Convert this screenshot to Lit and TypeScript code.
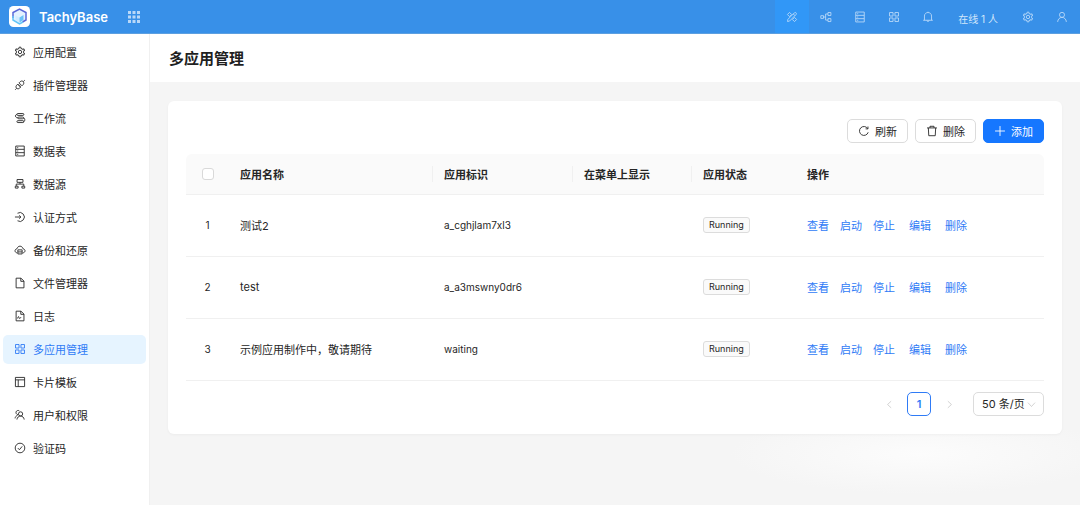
import { LitElement, html, svg, css, nothing, type SVGTemplateResult } from "lit";
import { customElement, property } from "lit/decorators.js";
import { classMap } from "lit/directives/class-map.js";

// Glyphs share a 1024-unit square; strokes come from the icon element's styles.
const ICONS: Record<string, SVGTemplateResult> = {
  setting: svg`
    <path class="solid" d="M924.8 625.7l-65.5-56c3.1-19 4.7-38.4 4.7-57.8s-1.6-38.8-4.7-57.8l65.5-56a32.03 32.03 0 009.3-35.2l-.9-2.6a443.74 443.74 0 00-79.7-137.9l-1.8-2.1a32.12 32.12 0 00-35.1-9.5l-81.3 28.9c-30-24.6-63.5-44-99.7-57.6l-15.7-85a32.05 32.05 0 00-25.8-25.7l-2.7-.5c-52.1-9.4-106.9-9.4-159 0l-2.7.5a32.05 32.05 0 00-25.8 25.7l-15.8 85.4a351.86 351.86 0 00-99 57.4l-81.9-29.1a32 32 0 00-35.1 9.5l-1.8 2.1a446.02 446.02 0 00-79.7 137.9l-.9 2.6c-4.5 12.5-.8 26.5 9.3 35.2l66.3 56.6c-3.1 18.8-4.6 38-4.6 57.1 0 19.2 1.5 38.4 4.6 57.1L99 625.5a32.03 32.03 0 00-9.3 35.2l.9 2.6c18.1 50.4 44.9 96.9 79.7 137.9l1.8 2.1a32.12 32.12 0 0035.1 9.5l81.9-29.1c29.8 24.5 63.1 43.9 99 57.4l15.8 85.4a32.05 32.05 0 0025.8 25.7l2.7.5a449.4 449.4 0 00159 0l2.7-.5a32.05 32.05 0 0025.8-25.7l15.7-85a350 350 0 0099.7-57.6l81.3 28.9a32 32 0 0035.1-9.5l1.8-2.1c34.8-41.1 61.6-87.5 79.7-137.9l.9-2.6c4.5-12.3.8-26.3-9.3-35zM788.3 465.9c2.5 15.1 3.8 30.6 3.8 46.1s-1.3 31-3.8 46.1l-6.6 40.1 74.7 63.9a370.03 370.03 0 01-42.6 73.6L721 702.8l-31.4 25.8c-23.9 19.6-50.5 35-79.3 45.8l-38.1 14.3-17.9 97a377.5 377.5 0 01-85 0l-17.9-97.2-37.8-14.5c-28.5-10.8-55-26.2-78.7-45.7l-31.4-25.9-93.4 33.2c-17-22.9-31.2-47.6-42.6-73.6l75.5-64.5-6.5-40c-2.4-14.9-3.7-30.3-3.7-45.5 0-15.3 1.2-30.6 3.7-45.5l6.5-40-75.5-64.5c11.3-26.1 25.6-50.7 42.6-73.6l93.4 33.2 31.4-25.9c23.7-19.5 50.2-34.9 78.7-45.7l37.9-14.3 17.9-97.2c28.1-3.2 56.8-3.2 85 0l17.9 97 38.1 14.3c28.7 10.8 55.4 26.2 79.3 45.8l31.4 25.8 92.8-32.9c17 22.9 31.2 47.6 42.6 73.6L781.8 426l6.5 39.9z"/>
    <circle cx="512" cy="508" r="144"/>`,
  plug: svg`
    <path d="M430 330l100-100c80-80 180-80 250-10s80 180 0 260L680 580z"/>
    <path d="M330 430L230 530c-80 80-80 180-10 250s180 80 260 0l100-100z"/>
    <path d="M790 230l130-130M230 790L100 920M450 500l-70 70M530 580l-70 70"/>`,
  workflow: svg`
    <path d="M330 130h430a80 80 0 010 160H330a80 80 0 010-160zM410 430h330a75 75 0 010 150H410a75 75 0 010-150zM330 740h430a80 80 0 010 160H330a80 80 0 010-160z"/>
    <path d="M250 210c-180 0-180 295 90 295M800 505c170 0 150 310 20 315"/>`,
  database: svg`
    <path d="M150 90h724v844H150zM150 370h724M150 654h724"/>
    <path d="M270 230h90M270 512h90M270 794h90"/>`,
  source: svg`
    <path d="M260 130h504v240H260zM512 370v150M190 680V520h644v160"/>
    <path d="M110 700h240v160H110zM674 700h240v160H674z"/>`,
  login: svg`
    <path d="M300 190a380 380 0 11 0 644M80 512h500M440 370l150 142-150 142"/>`,
  cloud: svg`
    <path d="M270 760c-240-30-240-320-20-350 80-300 440-300 524 0 230 40 220 320-20 350"/>
    <path d="M330 500h364v350H330zM330 675h364"/>`,
  file: svg`<path d="M180 100h420l250 250v574H180zM580 100v270h270"/>`,
  log: svg`<path d="M180 100h420l250 250v574H180zM580 100v270h270M300 720c60-200 120-200 130-60s100 40 190-60"/>`,
  apps: svg`<path d="M130 130h300v300H130zM594 130h300v300H594zM130 594h300v300H130zM594 594h300v300H594z"/>`,
  template: svg`<path d="M120 120h784v784H120zM120 330h784M360 330v574"/>`,
  team: svg`
    <circle cx="560" cy="420" r="180"/>
    <path d="M250 900c20-180 150-300 310-300s290 120 310 300"/>
    <path d="M330 480c-120-20-190-130-150-240 30-100 160-150 270-90M90 800c20-130 90-220 210-260"/>`,
  check: svg`<circle cx="512" cy="512" r="410"/><path d="M330 520l130 140 240-290"/>`,
  design: svg`
    <path d="M120 300l180-180 180 180-180 180zM544 724l180-180 180 180-180 180z"/>
    <path d="M130 894l30-180 560-560c90-90 230 50 140 140L300 860zM620 250l150 150"/>`,
  nodes: svg`
    <path d="M70 400h230v230H70zM680 130h250v250H680zM680 650h250v250H680z"/>
    <path d="M300 515h180M680 255H480v520h200"/>`,
  bell: svg`
    <path d="M100 790h824M210 790V430c0-400 604-400 604 0v360M420 800c0 130 184 130 184 0M512 60v70"/>`,
  user: svg`<circle cx="512" cy="330" r="215"/><path d="M140 930c20-230 170-385 372-385s352 155 372 385"/>`,
  reload: svg`<path d="M870 620a380 380 0 11-40-310M850 130v200H650"/>`,
  trash: svg`<path d="M90 250h844M340 250V110h344v140M200 250l36 664h552l36-664"/>`,
  plus: svg`<path d="M512 90v844M90 512h844"/>`,
  left: svg`<path d="M700 130L290 512l410 382"/>`,
  right: svg`<path d="M324 130l410 382-410 382"/>`,
  down: svg`<path d="M110 300l402 440 402-440"/>`,
};

const FONT = css`Inter, "Noto Sans CJK SC", sans-serif`;

@customElement("ui-icon")
export class UiIcon extends LitElement {
  @property() name = "";

  static styles = css`
    :host {
      display: inline-flex;
      flex: none;
      width: 12px;
      height: 12px;
    }
    .glyph {
      width: 100%;
      height: 100%;
      fill: none;
      stroke: currentColor;
      stroke-width: 76;
    }
    .solid {
      fill: currentColor;
      stroke: none;
    }
  `;

  render() {
    return html`<svg class="glyph" viewBox="0 0 1024 1024" aria-hidden="true">${ICONS[this.name] ?? nothing}</svg>`;
  }
}

const MENU = [
  ["setting", "应用配置"],
  ["plug", "插件管理器"],
  ["workflow", "工作流"],
  ["database", "数据表"],
  ["source", "数据源"],
  ["login", "认证方式"],
  ["cloud", "备份和还原"],
  ["file", "文件管理器"],
  ["log", "日志"],
  ["apps", "多应用管理"],
  ["template", "卡片模板"],
  ["team", "用户和权限"],
  ["check", "验证码"],
];

@customElement("top-bar")
export class TopBar extends LitElement {
  static styles = css`
    :host {
      display: flex;
      align-items: center;
      height: 34px;
      box-sizing: border-box;
      padding: 0 1px 0 9px;
      border-bottom: 1px solid #5c9fe0;
      background: #3890e8;
      color: #fff;
      font-family: ${FONT};
    }
    .logo {
      width: 21px;
      height: 21px;
    }
    .brand {
      margin: 0 20px 0 9px;
      font-size: 13px;
      font-weight: 600;
    }
    .grid {
      width: 12px;
      height: 12px;
      fill: #b9d8f8;
    }
    .plain {
      display: flex;
      align-items: center;
      justify-content: center;
      padding: 0;
      border: 0;
      background: none;
      color: #b9d9f8;
      cursor: pointer;
    }
    .tools {
      display: flex;
      align-self: stretch;
      margin-left: auto;
    }
    .tool {
      width: 34px;
    }
    .active {
      background: #3197f7;
    }
    .online {
      align-self: center;
      padding: 4px 13px 0;
      color: #d3e7fb;
      font-size: 10px;
      line-height: 14px;
    }
  `;

  private tool(icon: string, label: string, active = false) {
    return html`<button class=${classMap({ plain: true, tool: true, active })} aria-label=${label}>
      <ui-icon name=${icon}></ui-icon>
    </button>`;
  }

  render() {
    const dots = [0, 1, 2].flatMap((r) => [0, 1, 2].map((c) => [c * 9, r * 9]));
    return html`
      <svg class="logo" viewBox="0 0 42 42" aria-hidden="true">
        <rect width="42" height="42" rx="9" fill="#fff" />
        <path d="M21 6l13 7v15l-13 8-13-8V13z" fill="#e4f2ff" />
        <path d="M8 24V13l13-7 13 7v15l-7 4" fill="none" stroke="#5a68d8" stroke-width="3" />
        <path d="M8 20v8l13 8 7-4" fill="none" stroke="#62c4f7" stroke-width="3" />
        <path d="M13 19l8 4v10l-8-5z" fill="#d2ecff" />
        <path d="M21 23l8-5v10l-8 5z" fill="#6cc3f8" />
      </svg>
      <span class="brand">TachyBase</span>
      <button class="plain" aria-label="菜单">
        <svg class="grid" viewBox="0 0 24 24" aria-hidden="true">
          ${dots.map(([x, y]) => svg`<rect x=${x} y=${y} width="6" height="6" />`)}
        </svg>
      </button>
      <div class="tools">
        ${this.tool("design", "界面配置", true)} ${this.tool("nodes", "工作流")}
        ${this.tool("database", "数据表")} ${this.tool("apps", "应用")} ${this.tool("bell", "通知")}
        <span class="online">在线 1 人</span>
        ${this.tool("setting", "设置")} ${this.tool("user", "用户")}
      </div>
    `;
  }
}

@customElement("side-menu")
export class SideMenu extends LitElement {
  static styles = css`
    :host {
      display: block;
      border-right: 1px solid #f0f0f0;
      background: #fff;
      font-family: ${FONT};
      font-size: 11px;
    }
    .menu {
      display: flex;
      flex-direction: column;
      gap: 4px;
      padding: 4px 3px;
    }
    .item {
      display: flex;
      align-items: center;
      gap: 7px;
      height: 29px;
      box-sizing: border-box;
      padding: 0 11px 2px;
      border-radius: 5px;
      color: #262626;
      text-decoration: none;
    }
    .selected {
      background: #e6f4ff;
      color: #2f7bf6;
    }
  `;

  render() {
    return html`<nav class="menu">
      ${MENU.map(
        ([icon, label]) => html`<a class=${classMap({ item: true, selected: icon === "apps" })} href="#">
          <ui-icon name=${icon}></ui-icon><span>${label}</span>
        </a>`
      )}
    </nav>`;
  }
}

interface AppRecord {
  title: string;
  name: string;
  status: string;
}

const APPS: AppRecord[] = [
  { title: "测试2", name: "a_cghjlam7xl3", status: "Running" },
  { title: "test", name: "a_a3mswny0dr6", status: "Running" },
  { title: "示例应用制作中，敬请期待", name: "waiting", status: "Running" },
];

const HEADINGS = ["应用名称", "应用标识", "在菜单上显示", "应用状态", "操作"];

@customElement("app-manager")
export class AppManager extends LitElement {
  static styles = css`
    :host {
      display: block;
      padding: 18px;
      border-radius: 6px;
      background: #fff;
      box-shadow: 0 1px 3px rgba(0, 0, 0, 0.04);
      color: #262626;
      font-family: ${FONT};
      font-size: 11px;
    }
    .toolbar {
      display: flex;
      justify-content: flex-end;
      gap: 7px;
      margin-bottom: 11px;
    }
    .btn {
      display: flex;
      align-items: center;
      justify-content: center;
      gap: 5px;
      height: 24px;
      box-sizing: border-box;
      padding: 0 10px 1px;
      border: 1px solid #dcdcdc;
      border-radius: 5px;
      background: #fff;
      color: inherit;
      font: inherit;
      cursor: pointer;
    }
    .primary {
      border-color: #1677ff;
      background: #1677ff;
      color: #fff;
    }
    .table {
      width: 100%;
      border-collapse: separate;
      border-spacing: 0;
      table-layout: fixed;
    }
    .c-index {
      width: 43px;
    }
    .c-title {
      width: 204px;
    }
    .c-name {
      width: 140px;
    }
    .c-menu {
      width: 119px;
    }
    .c-status {
      width: 104px;
    }
    .th {
      height: 41px;
      box-sizing: border-box;
      padding: 0 11px;
      border-bottom: 1px solid #f0f0f0;
      background: linear-gradient(#f0f0f0, #f0f0f0) right center / 1px 16px no-repeat #fafafa;
      font-weight: 600;
      text-align: left;
    }
    .th:first-child,
    .th:nth-child(5),
    .th:last-child {
      background: #fafafa;
    }
    .th:first-child {
      border-radius: 6px 0 0 0;
    }
    .th:last-child {
      border-radius: 0 6px 0 0;
    }
    .td {
      height: 62px;
      box-sizing: border-box;
      padding: 0 11px 2px;
      border-bottom: 1px solid #f0f0f0;
    }
    .th:first-child,
    .td:first-child {
      padding-left: 0;
      padding-right: 0;
      text-align: center;
    }
    .code {
      font-size: 10px;
    }
    .tick {
      display: block;
      width: 12px;
      height: 12px;
      margin: 0 auto;
      border: 1px solid #d9d9d9;
      border-radius: 3px;
      background: #fff;
      appearance: none;
    }
    .tag {
      display: inline-block;
      padding: 0 5px;
      border: 1px solid #dcdcdc;
      border-radius: 3px;
      background: #fafafa;
      font-size: 9px;
      line-height: 14px;
    }
    .actions {
      display: flex;
      gap: 11px;
    }
    .action {
      color: #2f7bf6;
      text-decoration: none;
    }
    .apart {
      margin-left: 3px;
    }
    .pager {
      display: flex;
      align-items: center;
      justify-content: flex-end;
      margin-top: 11px;
    }
    .page {
      display: flex;
      align-items: center;
      justify-content: center;
      width: 24px;
      height: 24px;
      box-sizing: border-box;
      padding: 0;
      border: 1px solid #2f7bf6;
      border-radius: 5px;
      background: #fff;
      color: #2f7bf6;
      font: inherit;
      font-weight: 600;
    }
    .step {
      width: 36px;
      border: 0;
      background: none;
      color: #bfbfbf;
    }
    .arrow {
      width: 9px;
      height: 9px;
    }
    .size {
      position: relative;
      margin-left: 6px;
    }
    .select {
      display: block;
      width: 71px;
      height: 24px;
      padding: 0 8px 1px;
      border: 1px solid #dcdcdc;
      border-radius: 5px;
      background: #fff;
      color: inherit;
      font: inherit;
      appearance: none;
    }
    .caret {
      position: absolute;
      top: 8px;
      right: 8px;
      width: 9px;
      height: 9px;
      color: #bfbfbf;
      pointer-events: none;
    }
  `;

  private row(app: AppRecord, index: number) {
    return html`<tr>
      <td class="td code">${index + 1}</td>
      <td class="td">${app.title}</td>
      <td class="td code">${app.name}</td>
      <td class="td"></td>
      <td class="td"><span class="tag">${app.status}</span></td>
      <td class="td">
        <div class="actions">
          ${["查看", "启动", "停止", "编辑", "删除"].map(
            (label, i) => html`<a class=${classMap({ action: true, apart: i === 3 || i === 4 })} href="#">${label}</a>`
          )}
        </div>
      </td>
    </tr>`;
  }

  render() {
    return html`
      <div class="toolbar">
        <button class="btn"><ui-icon name="reload"></ui-icon>刷新</button>
        <button class="btn"><ui-icon name="trash"></ui-icon>删除</button>
        <button class="btn primary"><ui-icon name="plus"></ui-icon>添加</button>
      </div>
      <table class="table">
        <colgroup>
          <col class="c-index" />
          <col class="c-title" />
          <col class="c-name" />
          <col class="c-menu" />
          <col class="c-status" />
          <col />
        </colgroup>
        <thead>
          <tr>
            <th class="th"><input class="tick" type="checkbox" aria-label="全选" /></th>
            ${HEADINGS.map((label) => html`<th class="th">${label}</th>`)}
          </tr>
        </thead>
        <tbody>
          ${APPS.map((app, i) => this.row(app, i))}
        </tbody>
      </table>
      <div class="pager">
        <button class="page step" aria-label="上一页"><ui-icon class="arrow" name="left"></ui-icon></button>
        <button class="page">1</button>
        <button class="page step" aria-label="下一页"><ui-icon class="arrow" name="right"></ui-icon></button>
        <div class="size">
          <select class="select" aria-label="每页条数">
            <option>50 条/页</option>
          </select>
          <ui-icon class="caret" name="down"></ui-icon>
        </div>
      </div>
    `;
  }
}

@customElement("app-root")
export class AppRoot extends LitElement {
  static styles = css`
    :host {
      display: grid;
      grid-template: auto 1fr / 150px minmax(0, 1fr);
      min-height: 100vh;
      font-family: ${FONT};
    }
    .top {
      grid-column: 1 / -1;
    }
    .main {
      background: radial-gradient(ellipse 190px 40px at calc(100% - 160px) 420px, #fcfcfc, #f5f5f5) #f5f5f5;
    }
    .title {
      margin: 0;
      padding: 13px 19px 11px;
      background: #fff;
      color: #1f1f1f;
      font-size: 15px;
      font-weight: 600;
      line-height: 24px;
    }
    .card {
      margin: 19px 18px;
    }
  `;

  render() {
    return html`
      <top-bar class="top"></top-bar>
      <side-menu></side-menu>
      <main class="main">
        <h1 class="title">多应用管理</h1>
        <app-manager class="card"></app-manager>
      </main>
    `;
  }
}
